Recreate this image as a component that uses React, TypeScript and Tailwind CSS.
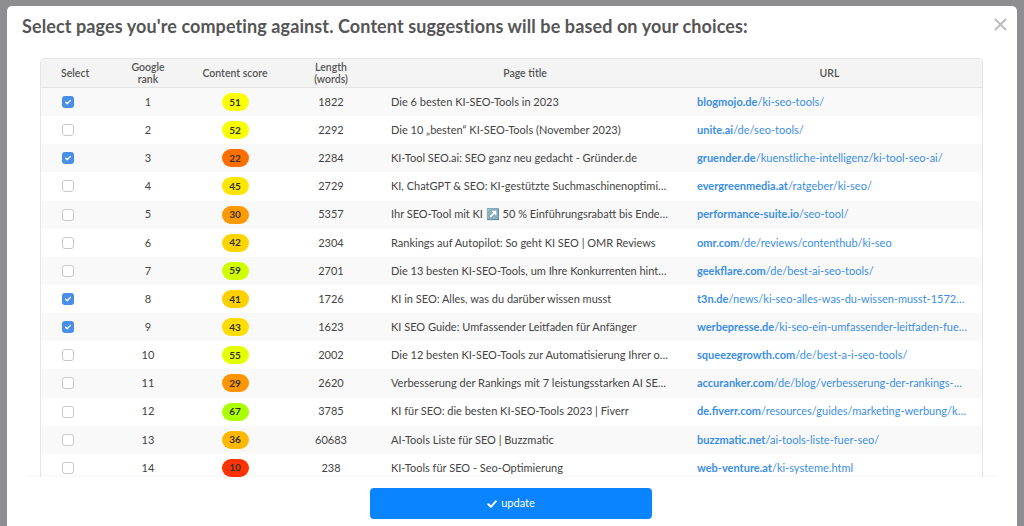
import React from "react";

type Row = { rank: number; score: number; len: number; title: string; domain: string; path: string; checked: boolean };

const rows: Row[] = [
  { rank: 1, score: 51, len: 1822, title: "Die 6 besten KI-SEO-Tools in 2023", domain: "blogmojo.de", path: "/ki-seo-tools/", checked: true },
  { rank: 2, score: 52, len: 2292, title: "Die 10 „besten“ KI-SEO-Tools (November 2023)", domain: "unite.ai", path: "/de/seo-tools/", checked: false },
  { rank: 3, score: 22, len: 2284, title: "KI-Tool SEO.ai: SEO ganz neu gedacht - Gründer.de", domain: "gruender.de", path: "/kuenstliche-intelligenz/ki-tool-seo-ai/", checked: true },
  { rank: 4, score: 45, len: 2729, title: "KI, ChatGPT & SEO: KI-gestützte Suchmaschinenoptimierung", domain: "evergreenmedia.at", path: "/ratgeber/ki-seo/", checked: false },
  { rank: 5, score: 30, len: 5357, title: "Ihr SEO-Tool mit KI ↗️ 50 % Einführungsrabatt bis Ende 2023", domain: "performance-suite.io", path: "/seo-tool/", checked: false },
  { rank: 6, score: 42, len: 2304, title: "Rankings auf Autopilot: So geht KI SEO | OMR Reviews", domain: "omr.com", path: "/de/reviews/contenthub/ki-seo", checked: false },
  { rank: 7, score: 59, len: 2701, title: "Die 13 besten KI-SEO-Tools, um Ihre Konkurrenten hinter sich zu lassen", domain: "geekflare.com", path: "/de/best-ai-seo-tools/", checked: false },
  { rank: 8, score: 41, len: 1726, title: "KI in SEO: Alles, was du darüber wissen musst", domain: "t3n.de", path: "/news/ki-seo-alles-was-du-wissen-musst-1572234/", checked: true },
  { rank: 9, score: 43, len: 1623, title: "KI SEO Guide: Umfassender Leitfaden für Anfänger", domain: "werbepresse.de", path: "/ki-seo-ein-umfassender-leitfaden-fuer-anfaenger/", checked: true },
  { rank: 10, score: 55, len: 2002, title: "Die 12 besten KI-SEO-Tools zur Automatisierung Ihrer organischen Suche", domain: "squeezegrowth.com", path: "/de/best-a-i-seo-tools/", checked: false },
  { rank: 11, score: 29, len: 2620, title: "Verbesserung der Rankings mit 7 leistungsstarken AI SEO Tools", domain: "accuranker.com", path: "/de/blog/verbesserung-der-rankings-mit-7-leistungsstarken", checked: false },
  { rank: 12, score: 67, len: 3785, title: "KI für SEO: die besten KI-SEO-Tools 2023 | Fiverr", domain: "de.fiverr.com", path: "/resources/guides/marketing-werbung/ki-fuer-seo", checked: false },
  { rank: 13, score: 36, len: 60683, title: "AI-Tools Liste für SEO | Buzzmatic", domain: "buzzmatic.net", path: "/ai-tools-liste-fuer-seo/", checked: false },
  { rank: 14, score: 10, len: 238, title: "KI-Tools für SEO - Seo-Optimierung", domain: "web-venture.at", path: "/ki-systeme.html", checked: false },
];

const grid = "grid grid-cols-[64px_86px_88px_104px_306px_1fr] items-center";

function Checkbox({ checked }: { checked: boolean }) {
  if (checked) {
    return (
      <div className="w-[12px] h-[12px] rounded-[3px] bg-[#4a8fe7] flex items-center justify-center">
        <svg width="8" height="8" viewBox="0 0 8 8">
          <path d="M1.6 4.2 L3.2 5.7 L6.4 2.4" fill="none" stroke="white" strokeWidth="1.3" strokeLinecap="round" strokeLinejoin="round" />
        </svg>
      </div>
    );
  }
  return <div className="w-[12px] h-[12px] rounded-[3px] border border-[#c8c8c8] bg-white" />;
}

export default function App() {
  return (
    <div className="w-[1024px] h-[526px] bg-[#8e8e90] overflow-hidden pt-[6px] px-[7px] font-['Lato','Noto_Sans',sans-serif]">
      <div className="relative bg-white rounded-t-[5px] h-[520px] flex flex-col">
        <div className="absolute right-[10px] top-[12px] text-[#bdbdbd]">
          <svg width="13" height="13" viewBox="0 0 13 13">
            <path d="M1.5 1.5 L11.5 11.5 M11.5 1.5 L1.5 11.5" stroke="currentColor" strokeWidth="2" strokeLinecap="round" />
          </svg>
        </div>
        <h1 className="pl-[15px] pt-[7px] h-[52px] text-[18px] font-bold text-[#555555] tracking-[0.1px]">
          Select pages you're competing against. Content suggestions will be based on your choices:
        </h1>
        <div className="mx-[15px] w-[978px] h-[419px] overflow-hidden relative">
          <div className="ml-[18px] w-[943px] border border-[#e6e6e6] rounded-t-[4px] overflow-hidden">
            <div className={`${grid} h-[29px] bg-[#f4f4f4] border-b border-[#e4e4e4] text-[10.5px] font-semibold text-[#555] leading-[12px]`}>
              <div className="pl-[20px]">Select</div>
              <div className="text-center">Google<br />rank</div>
              <div className="text-center">Content score</div>
              <div className="text-center">Length<br />(words)</div>
              <div className="text-center pr-[22px]">Page title</div>
              <div className="text-center pr-[12px]">URL</div>
            </div>
            {rows.map((r, i) => (
              <div key={r.rank} className={`${grid} h-[28.15px] text-[11px] text-[#444] ${i % 2 === 0 ? "bg-[#f9f9f9]" : "bg-white"}`}>
                <div className="pl-[21px]"><Checkbox checked={r.checked} /></div>
                <div className="text-center">{r.rank}</div>
                <div className="flex justify-center">
                  <div
                    className="w-[27px] h-[18px] rounded-full flex items-center justify-center text-[10px] font-bold text-[#333]"
                    style={{ backgroundColor: `hsl(${Math.round(r.score * 1.2)}, 100%, 50%)` }}
                  >
                    {r.score}
                  </div>
                </div>
                <div className="text-center">{r.len}</div>
                <div className="pl-[8px] pr-[20px] truncate">{r.title}</div>
                <div className="pl-[8px] pr-[14px] truncate text-[#3b8ee8]">
                  <span className="font-bold">{r.domain}</span>{r.path}
                </div>
              </div>
            ))}
          </div>
        </div>
        <div className="relative h-[49px] flex justify-center pt-[11px] shadow-[0_-4px_6px_-4px_rgba(0,0,0,0.06)] mx-[15px] w-[978px]">
          <button className="w-[282px] h-[31px] rounded-[4px] bg-[#0a84ff] text-white text-[11px] flex items-center justify-center gap-[4px]">
            <svg width="10" height="10" viewBox="0 0 10 10">
              <path d="M1.3 5.2 L3.9 7.8 L8.8 2.4" fill="none" stroke="white" strokeWidth="2" strokeLinecap="round" strokeLinejoin="round" />
            </svg>
            update
          </button>
        </div>
      </div>
    </div>
  );
}
